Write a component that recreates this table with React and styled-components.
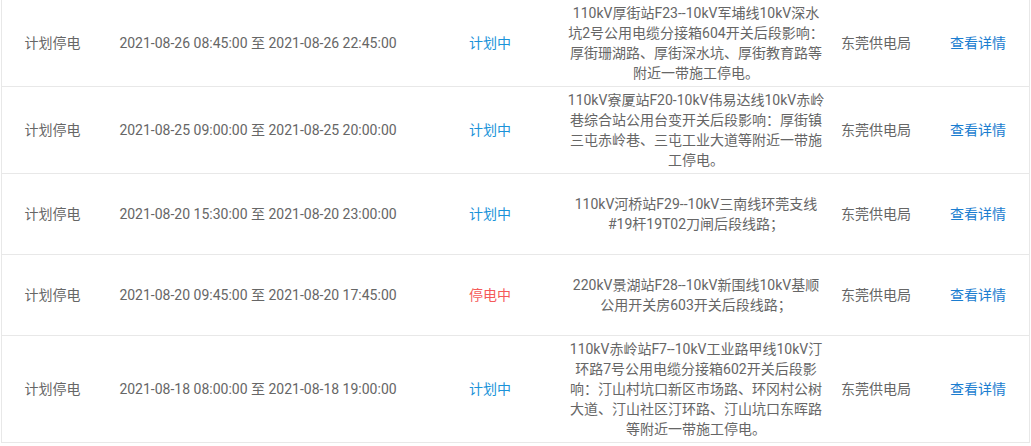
import styled, { createGlobalStyle } from "styled-components";

const GlobalStyle = createGlobalStyle`
  body {
    margin: 0;
    background: #fff;
    font-family: Roboto, "Noto Sans CJK SC", sans-serif;
    font-size: 14px;
    color: #666;
  }
`

const Table = styled.div`
  margin: 0 1px;
  border-left: 1px solid #e8e8e8;
  border-right: 1px solid #e8e8e8;
`

const Row = styled.div`
  display: grid;
  grid-template-columns: 101px 310px 154px 258px 102px 102px;
  align-items: center;
  min-height: 81px;
  padding: 3px 0;
  box-sizing: border-box;
  border-bottom: 1px solid #e8e8e8;
  line-height: 20px;
`

const Cell = styled.div`
  text-align: center;
  color: ${(p) => p.color || "#666"};
`

const Desc = styled.div`
  text-align: center;
`

const Link = styled.a`
  color: #1a7dd0;
  text-decoration: none;
  cursor: pointer;
`

const STATUS_COLOR = {
  "计划中": "#1a93d9",
  "停电中": "#f55a5a",
}

const data = [
  {
    id: 1,
    time: "2021-08-26 08:45:00 至 2021-08-26 22:45:00",
    status: "计划中",
    desc: "110kV厚街站F23--10kV军埔线10kV深水坑2号公用电缆分接箱604开关后段影响：厚街珊湖路、厚街深水坑、厚街教育路等附近一带施工停电。",
  },
  {
    id: 2,
    time: "2021-08-25 09:00:00 至 2021-08-25 20:00:00",
    status: "计划中",
    desc: "110kV寮厦站F20-10kV伟易达线10kV赤岭巷综合站公用台变开关后段影响：厚街镇三屯赤岭巷、三屯工业大道等附近一带施工停电。",
  },
  {
    id: 3,
    time: "2021-08-20 15:30:00 至 2021-08-20 23:00:00",
    status: "计划中",
    desc: "110kV河桥站F29--10kV三南线环莞支线#19杆19T02刀闸后段线路；",
  },
  {
    id: 4,
    time: "2021-08-20 09:45:00 至 2021-08-20 17:45:00",
    status: "停电中",
    desc: "220kV景湖站F28--10kV新围线10kV基顺公用开关房603开关后段线路；",
  },
  {
    id: 5,
    time: "2021-08-18 08:00:00 至 2021-08-18 19:00:00",
    status: "计划中",
    desc: "110kV赤岭站F7--10kV工业路甲线10kV汀环路7号公用电缆分接箱602开关后段影响：汀山村坑口新区市场路、环冈村公树大道、汀山社区汀环路、汀山坑口东晖路等附近一带施工停电。",
  },
]

export default function App() {
  return (
    <>
      <GlobalStyle />
      <Table>
        {data.map((item) => (
          <Row key={item.id}>
            <Cell>计划停电</Cell>
            <Cell>{item.time}</Cell>
            <Cell color={STATUS_COLOR[item.status]}>{item.status}</Cell>
            <Desc>{item.desc}</Desc>
            <Cell>东莞供电局</Cell>
            <Cell>
              <Link>查看详情</Link>
            </Cell>
          </Row>
        ))}
      </Table>
    </>
  )
}
